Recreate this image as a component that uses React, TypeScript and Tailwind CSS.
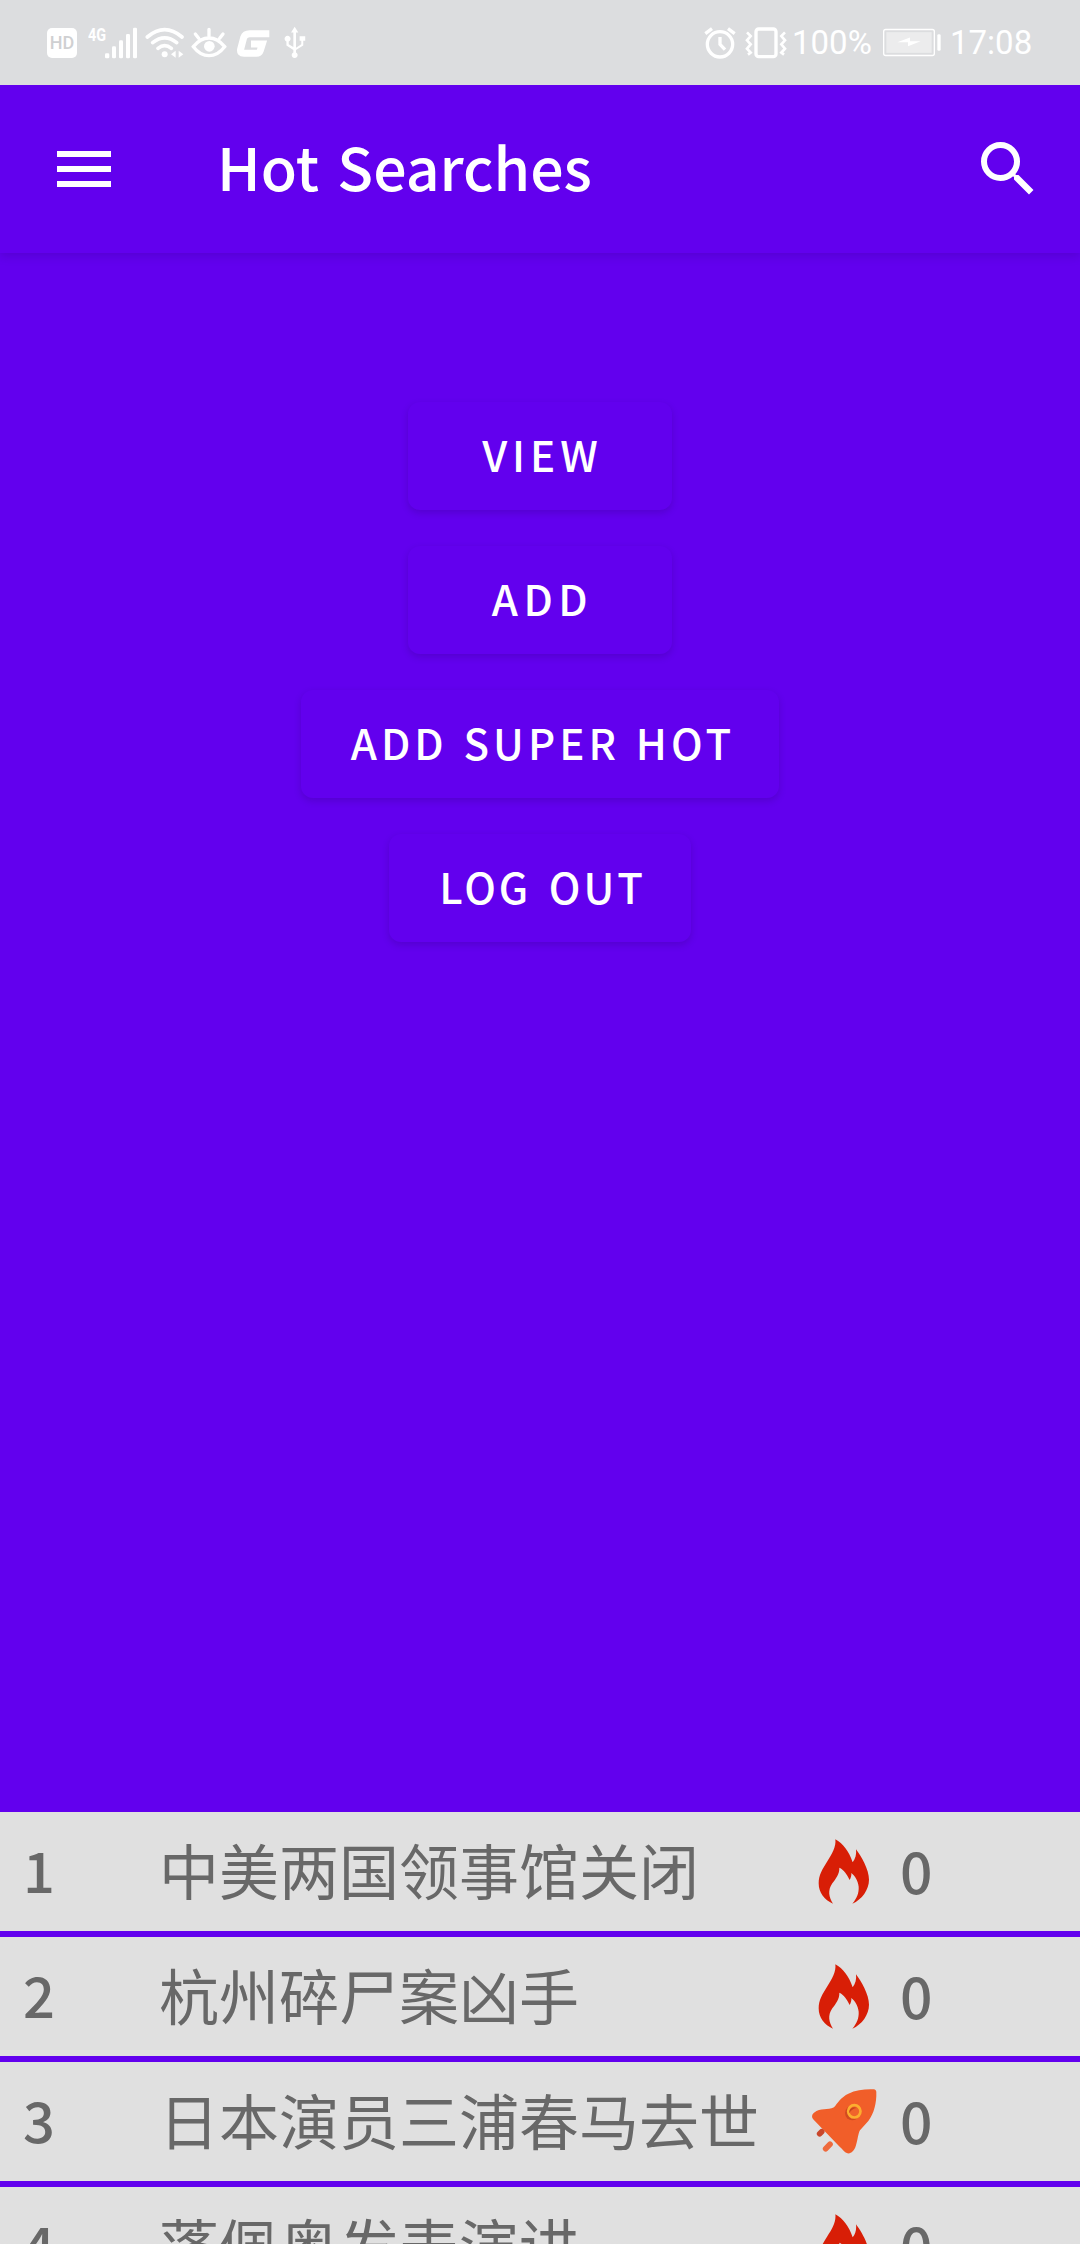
import type { ReactNode } from 'react';

const LATIN = "font-['Noto_Sans_CJK_SC','Noto_Sans',sans-serif]";

function StatusIcons() {
  return (
    <div className="flex items-center text-white">
      <div className="flex h-[30px] w-[30px] items-center justify-center rounded-[5px] bg-white font-['Roboto',sans-serif] text-[18px] leading-none font-medium text-[#cfd0d2]">
        HD
      </div>
      <div className="relative ml-[11px] h-[32px] w-[50px]">
        <span className="absolute top-0 left-0 origin-left scale-x-[0.8] font-['Roboto',sans-serif] text-[18px] leading-[15px] font-bold">4G</span>
        <svg viewBox="174 48 150 96" className="h-[32px] w-[50px]" fill="currentColor">
          <rect x="225" y="127" width="13" height="15" rx="4" />
          <rect x="246" y="106" width="12" height="36" rx="4" />
          <rect x="267" y="88" width="12" height="54" rx="4" />
          <rect x="288" y="69" width="12" height="73" rx="4" />
          <rect x="309" y="50" width="12" height="92" rx="4" />
        </svg>
      </div>
      <svg viewBox="345 48 120 96" className="ml-[7px] h-[32px] w-[40px]" fill="none" stroke="currentColor" strokeWidth="11" strokeLinecap="round">
        <path d="M352 78Q404 34 456 78M368 95Q404 66 440 95M384 112Q404 96 424 112" />
        <circle cx="404" cy="130" r="9" fill="currentColor" stroke="none" />
        <path d="M437 119v21l-14-10.500zM446 119v21l14-10.500z" fill="currentColor" stroke="none" />
      </svg>
      <svg viewBox="484 48 108 96" className="ml-[6px] h-[32px] w-[36px]" fill="none" stroke="currentColor" strokeWidth="10" strokeLinecap="round">
        <path d="M491 107Q512 81 538 81T585 107Q564 134 538 134T491 107ZM538 55v20M497 69l10 13M580 69l-10 13" />
        <circle cx="539" cy="106" r="16" fill="currentColor" stroke="none" />
      </svg>
      <svg viewBox="616 48 108 96" className="ml-[8px] h-[32px] w-[36px]" fill="none" stroke="currentColor" strokeWidth="21">
        <path d="M719 68H660Q646 68 642 80L633 114Q630 127 643 127H680Q689 127 692 118L698 99H664" />
      </svg>
      <svg viewBox="760 48 72 100" className="ml-[12px] h-[33px] w-[24px]" fill="currentColor">
        <path d="M795 50l11 18h-7v46l16-11v-10h-5V79h17v14h-6v14l-22 14v7a9 9 0 1 1-8 0v-7l-21-14V95a9 9 0 1 1 7 0v8l14 9V68h-7z" />
      </svg>
    </div>
  );
}

function StatusRight() {
  return (
    <div className="flex items-center font-['Roboto',sans-serif] text-[33px] leading-[40px] text-white">
      <svg viewBox="70 48 96 96" className="h-[32px] w-[32px]" fill="none" stroke="currentColor" strokeWidth="10">
        <circle cx="118" cy="100" r="38" />
        <path d="M118 78v22l15 16M74 68l20-15M142 53l20 15" />
      </svg>
      <svg viewBox="195 48 126 96" className="ml-[9px] h-[32px] w-[42px]" fill="none" stroke="currentColor" strokeWidth="10">
        <rect x="228" y="54" width="60" height="83" rx="8" />
        <path d="M201 64l11 11-11 13 11 12-11 13 11 12-8 6M315 64l-11 11 11 13-11 12 11 13-11 12 8 6" strokeWidth="8" />
      </svg>
      <span className="ml-[5px] w-[83px]">100%</span>
      <svg viewBox="602 54 180 86" className="ml-[7px] h-[29px] w-[60px]" fill="currentColor">
        <rect x="607" y="58" width="152" height="78" rx="6" fill="none" stroke="currentColor" strokeWidth="4" />
        <rect x="615" y="66" width="136" height="62" fillOpacity=".45" />
        <rect x="768" y="72" width="10" height="50" rx="4" />
        <path d="M648 96l38-14v11h32l-38 15v-12z" />
      </svg>
      <span className="ml-[8px] w-[84px]">17:08</span>
    </div>
  );
}

function Flame() {
  return (
    <svg viewBox="112 76 162 216" className="h-[72px] w-[54px]" fill="#d81e06">
      <path d="M167 86C190 98 208 122 219 155C227 145 231 132 229 116C245 137 268 177 268 207C268 237 247 266 218 279C232 262 238 247 237 228C235 210 226 196 215 187C216 195 213 202 210 208C202 191 192 177 179 171C180 190 168 204 158 218C143 239 148 261 160 279C134 268 117 246 117 218C117 193 128 176 143 152C157 130 170 108 167 86Z" />
    </svg>
  );
}

function Rocket() {
  return (
    <svg viewBox="84 76 216 216" className="h-[72px] w-[72px]">
      <path
        d="M281 86Q289 87 289 95C290 127 282 159 265 181L240 209C234 219 234 236 227 257C223 270 212 281 202 278C193 274 187 265 179 258L101 177C94 170 95 162 102 156C122 141 143 150 162 140C173 126 184 109 205 99C228 88 255 85 281 86Z"
        fill="#f15e29"
      />
      <circle cx="217" cy="157" r="22" fill="#d24a20" />
      <circle cx="223" cy="152" r="18.500" fill="#f0642b" stroke="#fcae2f" strokeWidth="8" />
      <path d="M208 158a15 15 0 0 1 22-16c-10 1-18 7-22 16z" fill="#c8441d" />
      <path d="M119 219l6-6" stroke="#c9472b" strokeWidth="17" strokeLinecap="round" />
      <path d="M137 264l13-13" stroke="#ee6a3d" strokeWidth="17" strokeLinecap="round" />
    </svg>
  );
}

function ActionButton({ children, className }: { children: ReactNode; className: string }) {
  return (
    <button
      className={`flex h-[108px] items-center justify-center rounded-[12px] bg-[#6200ee] pb-[4px] text-[42px] leading-none font-medium text-white shadow-[0_3px_7px_rgba(40,0,110,0.24)] ${LATIN} ${className}`}
    >
      {children}
    </button>
  );
}

const searches = [
  { title: '中美两国领事馆关闭', hot: 0, boosted: false },
  { title: '杭州碎尸案凶手', hot: 0, boosted: false },
  { title: '日本演员三浦春马去世', hot: 0, boosted: true },
  { title: '蓬佩奥发表演讲', hot: 0, boosted: false },
];

export default function App() {
  return (
    <div className="flex h-[2244px] w-[1080px] flex-col overflow-hidden bg-[#6200ee]">
      <div className="relative z-10 flex h-[85px] shrink-0 items-center justify-between bg-[#dcdddf] pr-[46px] pl-[47px]">
        <StatusIcons />
        <StatusRight />
      </div>

      <header className="flex h-[168px] shrink-0 items-center bg-[#6200ee] px-[36px] pl-[48px] shadow-[0_3px_9px_rgba(40,0,110,0.22)]">
        <svg viewBox="0 0 24 24" className="h-[72px] w-[72px]" fill="white">
          <path d="M3 18h18v-2H3v2zm0-5h18v-2H3v2zm0-7v2h18V6H3z" />
        </svg>
        <h1 className={`ml-[97px] flex-1 pb-[8px] text-[59px] leading-none font-medium [word-spacing:5px] whitespace-nowrap text-white ${LATIN}`}>
          Hot Searches
        </h1>
        <svg viewBox="0 0 24 24" className="h-[72px] w-[72px]" fill="white">
          <path d="M15.500 14h-.79l-.28-.27A6.471 6.471 0 0 0 16 9.500 6.500 6.500 0 1 0 9.500 16c1.610 0 3.090-.59 4.230-1.570l.27.28v.79l5 4.990L20.490 19l-4.990-5zm-6 0C7.010 14 5 11.990 5 9.500S7.010 5 9.500 5 14 7.010 14 9.500 11.990 14 9.500 14z" />
        </svg>
      </header>

      <main className="flex flex-1 flex-col items-center gap-[36px] pt-[149px]">
        <ActionButton className="w-[264px] pl-[5px] tracking-[5px]">VIEW</ActionButton>
        <ActionButton className="w-[264px] pl-[5px] tracking-[5.5px]">ADD</ActionButton>
        <ActionButton className="w-[478px] pl-[6px] tracking-[4.1px] [word-spacing:2px]">ADD SUPER HOT</ActionButton>
        <ActionButton className="w-[302px] pl-[5px] tracking-[3px] [word-spacing:5px]">LOG OUT</ActionButton>
      </main>

      <ul className="flex h-[432px] shrink-0 flex-col gap-[6px] overflow-hidden">
        {searches.map((item, i) => (
          <li
            key={item.title}
            className="flex h-[119px] shrink-0 items-center bg-[#e0e0e0] pl-[23px] font-['Noto_Sans_CJK_SC',sans-serif] text-[60px] leading-[72px] text-[#686868]"
          >
            <span className="w-[136px] pb-[5px] text-[56px] font-medium">{i + 1}</span>
            <span className="w-[649px] pb-[5px] whitespace-nowrap">{item.title}</span>
            <span className="flex w-[72px] justify-center">{item.boosted ? <Rocket /> : <Flame />}</span>
            <span className="ml-[20px] pb-[5px] text-[57px] font-medium">{item.hot}</span>
          </li>
        ))}
      </ul>
    </div>
  );
}
